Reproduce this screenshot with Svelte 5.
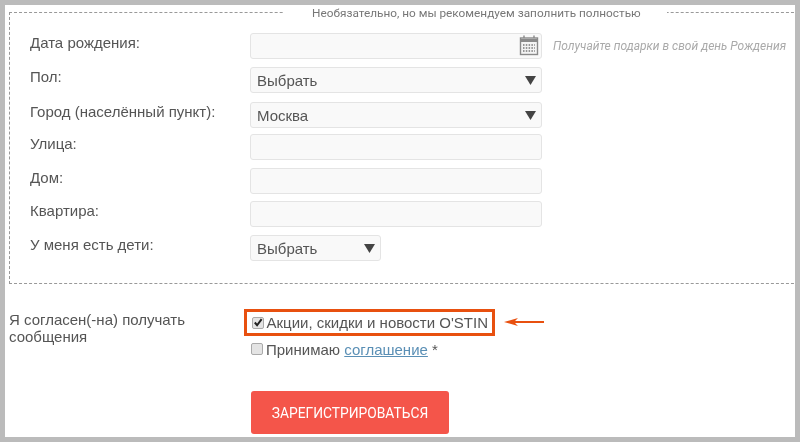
<script>
  const rows = [
    { label: 'Дата рождения:', kind: 'date' },
    { label: 'Пол:', kind: 'select', value: 'Выбрать' },
    { label: 'Город (населённый пункт):', kind: 'select', value: 'Москва' },
    { label: 'Улица:', kind: 'input' },
    { label: 'Дом:', kind: 'input' },
    { label: 'Квартира:', kind: 'input' },
    { label: 'У меня есть дети:', kind: 'short', value: 'Выбрать' }
  ];
</script>

<div class="frame">
  <fieldset class="box">
    <legend>Необязательно, но мы рекомендуем заполнить полностью</legend>
    <div class="rows">
      {#each rows as r}
        <div class="row">
          <div class="label">{r.label}</div>
          <div class="field" class:short={r.kind === 'short'}>
            {#if r.value}<span>{r.value}</span>{/if}
            {#if r.kind === 'select' || r.kind === 'short'}
              <svg class="tri" width="11" height="9" viewBox="0 0 11 9"><path d="M0 0H11L5.5 9Z" fill="#444" /></svg>
            {/if}
            {#if r.kind === 'date'}
              <svg class="cal" width="20" height="21" viewBox="0 0 20 21" fill="none" stroke="#8a8a8a">
                <rect x="1.5" y="3" width="17" height="16.5" stroke-width="1.4" fill="#f4f4f4" />
                <path d="M1.5 5.5H18.5" stroke-width="3" />
                <path d="M5 0.5V3M15 0.5V3" stroke-width="1.4" />
                <path d="M4 10H16M4 13H16M4 16H16" stroke-width="1.5" stroke-dasharray="1.5 1.3" stroke="#777" />
              </svg>
            {/if}
          </div>
          {#if r.kind === 'date'}
            <div class="hint">Получайте подарки в свой день Рождения</div>
          {/if}
        </div>
      {/each}
    </div>
  </fieldset>

  <div class="consent">
    <div class="clabel">Я согласен(-на) получать сообщения</div>
    <div class="checks">
      <div class="hl">
        <span class="cb"><svg width="11" height="11" viewBox="0 0 11 11"><path d="M2 5.5L4.5 8.5L9.5 1.8" fill="none" stroke="#222" stroke-width="2.2" /></svg></span>
        <span>Акции, скидки и новости O'STIN</span>
        <svg class="arrow" width="42" height="10" viewBox="0 0 42 10"><path d="M1 5L15 1L12 4H41V6H12L15 9Z" fill="#e8500f" /></svg>
      </div>
      <div class="agree"><span class="cb"></span><span>Принимаю <a href="#agreement">соглашение</a> *</span></div>
      <button class="submit">ЗАРЕГИСТРИРОВАТЬСЯ</button>
    </div>
  </div>
</div>

<style>
  :global(body) { margin: 0; background: #fff; }
  .frame {
    box-sizing: border-box;
    width: 800px;
    height: 442px;
    border: 5px solid #bbb;
    background: #fff;
    overflow: hidden;
    font-family: "Liberation Sans", Arial, sans-serif;
    font-size: 15px;
    color: #555;
    filter: blur(0.45px);
  }
  .box {
    box-sizing: border-box;
    width: 800px;
    height: 279px;
    margin: 0 0 0 4px;
    padding: 13px 0 0 20px;
    border: 1px dashed #999;
    min-inline-size: auto;
  }
  legend {
    margin-left: 253px;
    padding: 2px 26px 0 29px;
    font-size: 11.8px;
    line-height: 13px;
    color: #777;
    font-family: Roboto, "Liberation Sans", sans-serif;
  }
  .rows { display: flex; flex-direction: column; gap: 7.67px; }
  .row { display: flex; height: 26px; }
  .row:nth-child(3) { margin-block: 1.5px -1.5px; }
  .label { width: 220px; line-height: 19px; flex: none; }
  .field {
    box-sizing: border-box;
    width: 292px;
    height: 26px;
    display: flex;
    align-items: center;
    justify-content: space-between;
    padding: 2px 5px 0 6px;
    background: #f9f9f9;
    border: 1.5px solid #e4e4e4;
    border-radius: 3px;
    flex: none;
    position: relative;
  }
  .field.short { width: 131px; }
  .cal { position: absolute; right: 2px; top: 1px; }
  .hint {
    margin: 6px 0 0 11px;
    font-size: 12px;
    font-style: italic;
    color: #aaa;
    font-family: Roboto, "Liberation Sans", sans-serif;
    white-space: nowrap;
  }
  .consent { display: flex; margin-top: 29px; padding-left: 4px; }
  .clabel { width: 236px; line-height: 17px; padding-right: 40px; box-sizing: border-box; margin-top: -2px; }
  .checks { position: relative; }
  .hl {
    display: flex;
    align-items: center;
    gap: 3px;
    width: 251px;
    height: 27px;
    box-sizing: border-box;
    margin-left: -1px;
    margin-top: -4px;
    padding-left: 4.5px;
    border: 3px solid #e8500f;
    position: relative;
    white-space: nowrap;
  }
  .arrow { position: absolute; left: 256px; top: 5px; }
  .cb {
    box-sizing: border-box;
    width: 12px;
    height: 12px;
    display: inline-flex;
    align-items: center;
    justify-content: center;
    background: #e4e4e4;
    border: 1px solid #aaa;
    border-radius: 2px;
    flex: none;
  }
  .agree { display: flex; align-items: center; gap: 3px; margin: 2px 0 0 6px; height: 22px; white-space: nowrap; }
  .agree a { color: #5a8fb5; text-decoration: underline; }
  .submit {
    display: block;
    width: 198px;
    height: 43px;
    margin: 31px 0 0 6px;
    background: #f4554a;
    color: #fff;
    border: none;
    border-radius: 3px;
    font-family: Roboto, "Liberation Sans", sans-serif;
    font-size: 13.8px;
    font-weight: 400;
    padding: 0;
  }
</style>
